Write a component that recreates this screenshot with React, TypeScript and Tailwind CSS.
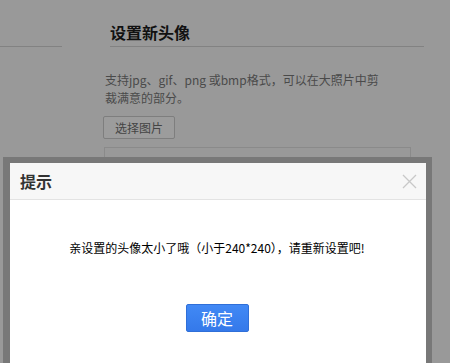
const font = "font-['Noto_Sans_CJK_SC','Liberation_Sans',sans-serif]"

function CloseIcon() {
  return (
    <svg width="15" height="15" viewBox="0 0 15 15" className="text-[#c8c8c8]">
      <path d="M1 1L14 14M14 1L1 14" stroke="currentColor" strokeWidth="1.3" fill="none" />
    </svg>
  )
}

export default function App() {
  return (
    <div className={`relative w-[450px] h-[363px] overflow-hidden bg-[#999999] ${font}`}>
      {/* page behind the mask */}
      <div className="flex">
        <div className="w-[62px] h-[47px] border-b border-[#828282]" />
        <div className="ml-[41px] w-[321px] pt-[22px]">
          <h2 className="ml-[7px] text-[16px] leading-[20px] pb-[4px] font-bold text-[#111] border-b border-[#828282]">
            设置新头像
          </h2>
          <p className="ml-[2px] mt-[24px] text-[12px] leading-[18px] text-[#4a4a4a]">
            支持jpg、gif、png 或bmp格式，可以在大照片中剪
            <br />
            裁满意的部分。
          </p>
          <button className="mt-[9px] w-[72px] h-[23px] border border-[#7e7e7e] rounded-[2px] bg-[#9c9c9c] text-[12px] text-[#444]">
            选择图片
          </button>
          <div className="ml-[1px] mt-[8px] w-[307px] h-[40px] border border-[#8a8a8a]" />
        </div>
      </div>

      {/* dialog */}
      <div className="absolute left-[3px] top-[157px] w-[429px] h-[220px] pl-[7px] pr-[6px] pt-[6px] bg-[#787878]">
        <div className="h-full bg-white">
          <div className="flex items-center justify-between h-[37px] pl-[10px] pr-[9px] bg-[#f7f7f7] border-b border-[#e3e3e3]">
            <span className="text-[16px] font-bold text-[#333]">提示</span>
            <CloseIcon />
          </div>
          <p className="mt-[39px] text-center text-[12px] leading-[18px] text-black pr-[2px]">
            亲设置的头像太小了哦（小于240*240），请重新设置吧!
          </p>
          <div className="flex justify-center mt-[47px] pr-[2px]">
            <button className="w-[63px] h-[28px] rounded-[2px] border border-[#2f6fd8] bg-gradient-to-b from-[#4189f5] to-[#3479ea] text-white text-[16px] leading-none">
              确定
            </button>
          </div>
        </div>
      </div>
    </div>
  )
}
